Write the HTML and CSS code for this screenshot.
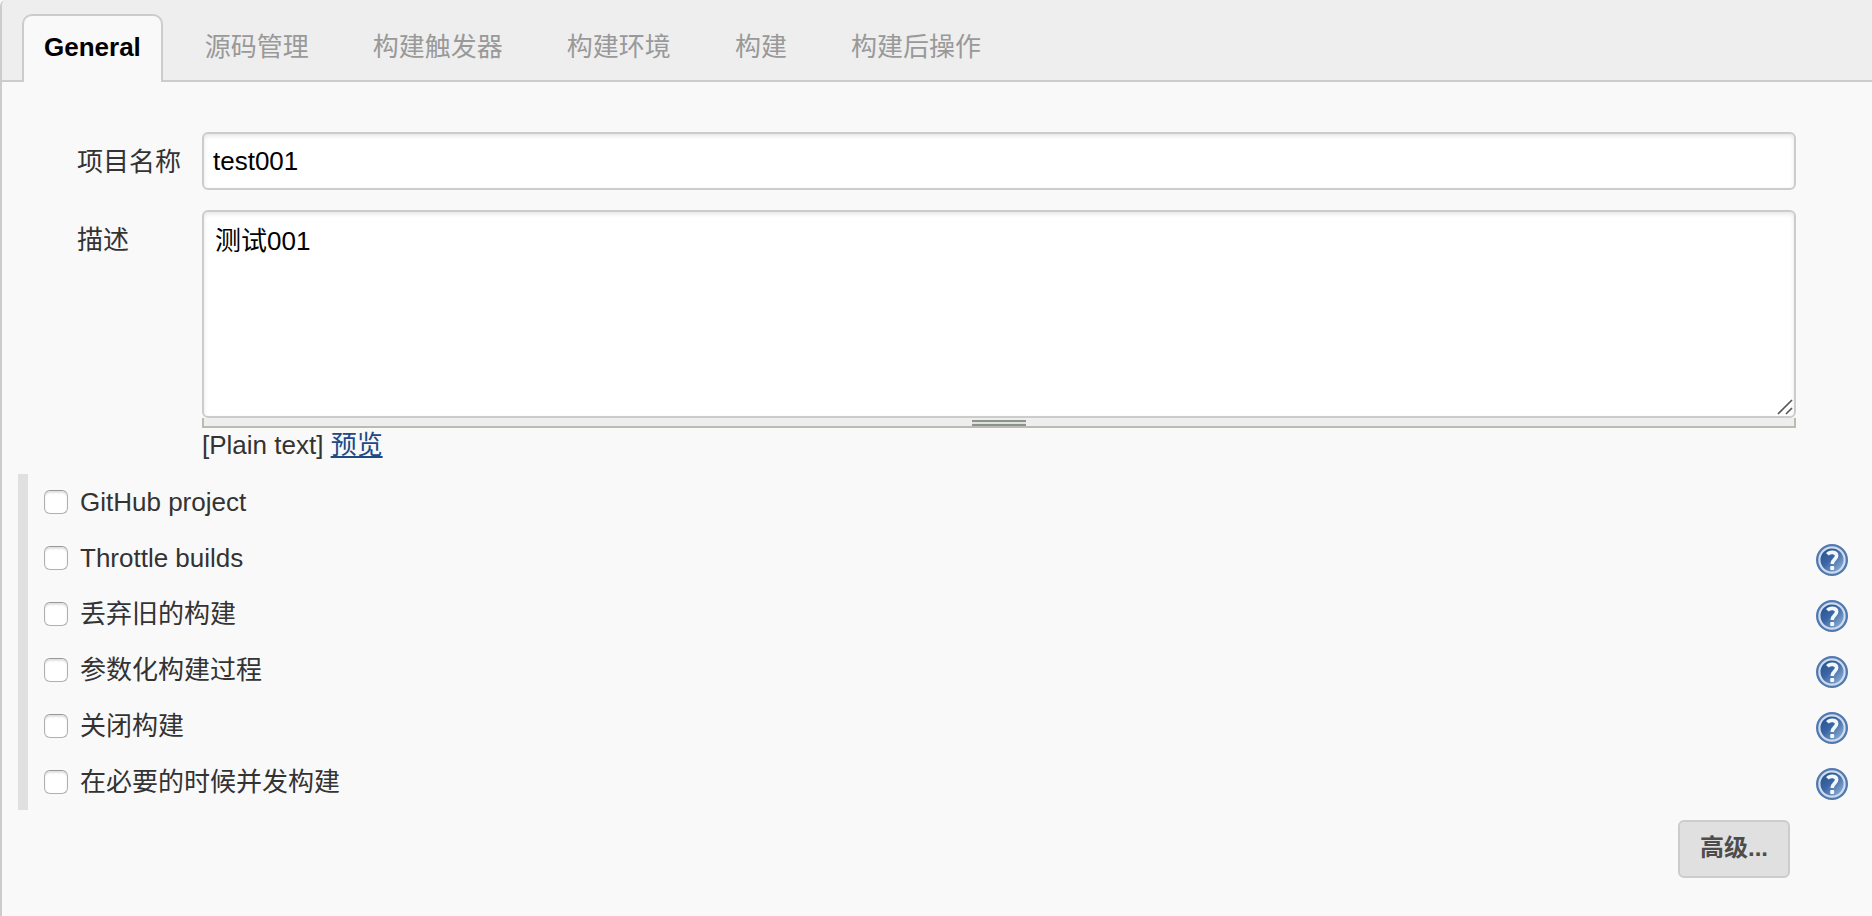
FILE: index.html
```html
<!DOCTYPE html>
<html lang="zh-CN">
<head>
<meta charset="utf-8">
<title>test001 Config</title>
<link rel="stylesheet" href="styles.css">
</head>
<body>
<svg class="defs" width="0" height="0" aria-hidden="true">
  <defs>
    <linearGradient id="ball" x1="0" y1="0" x2="1" y2="1">
      <stop offset="0.15" stop-color="#2c5595"/>
      <stop offset="0.45" stop-color="#3c66a3"/>
      <stop offset="0.9" stop-color="#8db0d6"/>
    </linearGradient>
    <symbol id="help" viewBox="0 0 32 32">
      <circle cx="16" cy="16" r="16" fill="#5079b0"/>
      <circle cx="16" cy="16" r="12.6" fill="url(#ball)" stroke="#cddbed" stroke-width="2.2"/>
      <path d="M11.5 10.4C13.5 7.6 20.6 7.4 20.6 11.8C20.6 15.2 16.2 15.4 16.2 20" fill="none" stroke="#f4f8fc" stroke-width="3.6"/>
      <rect x="14.2" y="22" width="4" height="4" rx="1" fill="#f4f8fc"/>
    </symbol>
  </defs>
</svg>
<form class="panel">
  <nav class="tabs">
    <a class="tab active" href="#general">General</a>
    <a class="tab" href="#scm">源码管理</a>
    <a class="tab" href="#triggers">构建触发器</a>
    <a class="tab" href="#environment">构建环境</a>
    <a class="tab" href="#build">构建</a>
    <a class="tab" href="#post-build">构建后操作</a>
  </nav>
  <div class="fields">
    <label class="name" for="project-name">项目名称</label>
    <input class="box" id="project-name" type="text" value="test001">
    <label class="name" for="description">描述</label>
    <div class="editor">
      <div class="area-wrap">
        <textarea class="box area" id="description">测试001</textarea>
        <svg class="corner" width="16" height="16" viewBox="0 0 16 16" fill="none" stroke="#555" stroke-width="1.6"><path d="M1 15L15 1M9 15L15 9"/></svg>
      </div>
      <div class="grip"><span class="grip-handle"></span></div>
      <div class="format">[Plain text] <a href="#preview">预览</a></div>
    </div>
  </div>
  <div class="options">
    <div class="option"><input type="checkbox" id="o1"><label for="o1">GitHub project</label></div>
    <div class="option"><input type="checkbox" id="o2"><label for="o2">Throttle builds</label><a class="help" href="#help-throttle" aria-label="Help"><svg><use href="#help"/></svg></a></div>
    <div class="option"><input type="checkbox" id="o3"><label for="o3">丢弃旧的构建</label><a class="help" href="#help-discard" aria-label="Help"><svg><use href="#help"/></svg></a></div>
    <div class="option"><input type="checkbox" id="o4"><label for="o4">参数化构建过程</label><a class="help" href="#help-parameters" aria-label="Help"><svg><use href="#help"/></svg></a></div>
    <div class="option"><input type="checkbox" id="o5"><label for="o5">关闭构建</label><a class="help" href="#help-disable" aria-label="Help"><svg><use href="#help"/></svg></a></div>
    <div class="option"><input type="checkbox" id="o6"><label for="o6">在必要的时候并发构建</label><a class="help" href="#help-concurrent" aria-label="Help"><svg><use href="#help"/></svg></a></div>
  </div>
  <div class="actions"><button class="advanced" type="button">高级...</button></div>
</form>
</body>
</html>
```
FILE: styles.css
```css
* {
  box-sizing: border-box;
}

body {
  margin: 0;
  background: #f9f9f9;
  color: #333;
  font: 26px/32px "Liberation Sans", "Noto Sans CJK SC", sans-serif;
}

.defs {
  position: absolute;
}

.panel {
  min-height: 100vh;
  border-left: 2px solid #ccc;
  border-top-left-radius: 6px;
  overflow: hidden;
}

.tabs {
  display: flex;
  gap: 20px;
  padding: 14px 20px 0;
  background: #eee;
  border-bottom: 2px solid #ccc;
}

.tab {
  height: 68px;
  margin-bottom: -2px;
  padding: 15px 20px;
  border: 2px solid transparent;
  border-bottom: 0;
  color: #999;
  text-decoration: none;
}

.tab.active {
  background: #f9f9f9;
  border-color: #ccc;
  border-radius: 10px 10px 0 0;
  color: #000;
  font-weight: bold;
}

.fields {
  display: grid;
  grid-template-columns: 125px 1fr;
  row-gap: 20px;
  padding: 50px 76px 0 75px;
}

.name {
  padding-top: 14px;
}

.box {
  display: block;
  width: 100%;
  border: 2px solid #ccc;
  border-radius: 6px;
  background: #fff;
  box-shadow: inset 0 2px 4px rgba(0, 0, 0, 0.1);
  color: #000;
  font: inherit;
  outline: none;
}

input.box {
  height: 58px;
  padding: 0 9px;
}

.area-wrap {
  position: relative;
}

.area {
  height: 208px;
  padding: 13px 11px;
  resize: none;
}

.corner {
  position: absolute;
  right: 3px;
  bottom: 3px;
}

.grip {
  display: flex;
  justify-content: center;
  align-items: flex-end;
  height: 10px;
  border: 2px solid #bbbbb4;
  border-top: 0;
  background: #eee;
}

.grip-handle {
  width: 54px;
  height: 6px;
  border: solid #8c938c;
  border-width: 2px 0;
  background: #dce2dc;
}

.format {
  padding-top: 1px;
}

.format a {
  color: #204a87;
}

.options {
  margin: 13px 24px 0 16px;
  border-left: 10px solid #e0e0e0;
}

.option {
  display: flex;
  align-items: center;
  height: 56px;
  padding-left: 16px;
}

.option input {
  appearance: none;
  width: 24px;
  height: 24px;
  margin: 0 12px 0 0;
  border: 1px solid #b0b0b0;
  border-top-color: #999;
  border-radius: 6px;
  background: #fff;
  box-shadow: inset 0 2px 2px rgba(0, 0, 0, 0.12);
}

.help {
  margin-left: auto;
  padding-top: 4px;
}

.help svg {
  display: block;
  width: 32px;
  height: 32px;
}

.actions {
  display: flex;
  justify-content: flex-end;
  padding: 10px 82px 0;
}

.advanced {
  height: 58px;
  padding: 0 20px 2px;
  border: 2px solid #ccc;
  border-radius: 6px;
  background: #e0e0e0;
  color: #4d4d4d;
  font: bold 24px/32px "Liberation Sans", "Noto Sans CJK SC", sans-serif;
}
```
